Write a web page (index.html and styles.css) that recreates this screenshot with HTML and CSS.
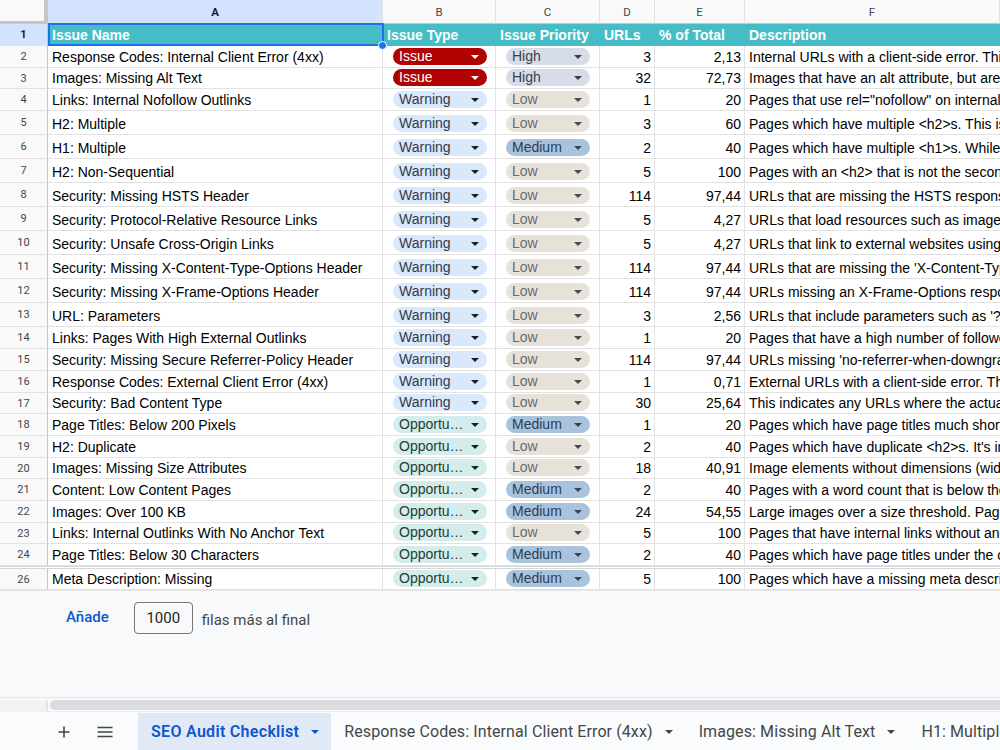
FILE: index.html
```html
<!DOCTYPE html>
<html lang="es">
<head>
<meta charset="utf-8">
<title>SEO Audit Checklist</title>
<link rel="stylesheet" href="styles.css">
</head>
<body>
<div class="app">
  <div class="sheet">
    <div class="row colhead">
      <div class="corner"></div>
      <div class="ch sel">A</div>
      <div class="ch">B</div>
      <div class="ch">C</div>
      <div class="ch">D</div>
      <div class="ch">E</div>
      <div class="ch">F</div>
    </div>

    <div class="row hdr h22">
      <div class="rh sel">1</div>
      <div class="c a1">Issue Name<span class="handle"></span></div>
      <div class="c">Issue Type</div>
      <div class="c">Issue Priority</div>
      <div class="c">URLs</div>
      <div class="c">% of Total</div>
      <div class="c">Description</div>
    </div>

    <div class="row h22">
      <div class="rh">2</div>
      <div class="c">Response Codes: Internal Client Error (4xx)</div>
      <div class="c cc"><span class="chip t issue"><span class="ct">Issue</span><i class="dd"></i></span></div>
      <div class="c cc"><span class="chip p high"><span class="ct">High</span><i class="dd"></i></span></div>
      <div class="c n">3</div>
      <div class="c n">2,13</div>
      <div class="c">Internal URLs with a client-side error. This indicates a problem occurred with the URL request.</div>
    </div>

    <div class="row h21">
      <div class="rh">3</div>
      <div class="c">Images: Missing Alt Text</div>
      <div class="c cc"><span class="chip t issue"><span class="ct">Issue</span><i class="dd"></i></span></div>
      <div class="c cc"><span class="chip p high"><span class="ct">High</span><i class="dd"></i></span></div>
      <div class="c n">32</div>
      <div class="c n">72,73</div>
      <div class="c">Images that have an alt attribute, but are missing alt text.</div>
    </div>

    <div class="row h22">
      <div class="rh">4</div>
      <div class="c">Links: Internal Nofollow Outlinks</div>
      <div class="c cc"><span class="chip t warn"><span class="ct">Warning</span><i class="dd"></i></span></div>
      <div class="c cc"><span class="chip p low"><span class="ct">Low</span><i class="dd"></i></span></div>
      <div class="c n">1</div>
      <div class="c n">20</div>
      <div class="c">Pages that use rel="nofollow" on internal outlinks.</div>
    </div>

    <div class="row h24">
      <div class="rh">5</div>
      <div class="c">H2: Multiple</div>
      <div class="c cc"><span class="chip t warn"><span class="ct">Warning</span><i class="dd"></i></span></div>
      <div class="c cc"><span class="chip p low"><span class="ct">Low</span><i class="dd"></i></span></div>
      <div class="c n">3</div>
      <div class="c n">60</div>
      <div class="c">Pages which have multiple &lt;h2&gt;s. This is not an issue.</div>
    </div>

    <div class="row h24">
      <div class="rh">6</div>
      <div class="c">H1: Multiple</div>
      <div class="c cc"><span class="chip t warn"><span class="ct">Warning</span><i class="dd"></i></span></div>
      <div class="c cc"><span class="chip p med"><span class="ct">Medium</span><i class="dd"></i></span></div>
      <div class="c n">2</div>
      <div class="c n">40</div>
      <div class="c">Pages which have multiple &lt;h1&gt;s. While this is not strictly an issue.</div>
    </div>

    <div class="row h24">
      <div class="rh">7</div>
      <div class="c">H2: Non-Sequential</div>
      <div class="c cc"><span class="chip t warn"><span class="ct">Warning</span><i class="dd"></i></span></div>
      <div class="c cc"><span class="chip p low"><span class="ct">Low</span><i class="dd"></i></span></div>
      <div class="c n">5</div>
      <div class="c n">100</div>
      <div class="c">Pages with an &lt;h2&gt; that is not the second heading level.</div>
    </div>

    <div class="row h24">
      <div class="rh">8</div>
      <div class="c">Security: Missing HSTS Header</div>
      <div class="c cc"><span class="chip t warn"><span class="ct">Warning</span><i class="dd"></i></span></div>
      <div class="c cc"><span class="chip p low"><span class="ct">Low</span><i class="dd"></i></span></div>
      <div class="c n">114</div>
      <div class="c n">97,44</div>
      <div class="c">URLs that are missing the HSTS response header.</div>
    </div>

    <div class="row h24">
      <div class="rh">9</div>
      <div class="c">Security: Protocol-Relative Resource Links</div>
      <div class="c cc"><span class="chip t warn"><span class="ct">Warning</span><i class="dd"></i></span></div>
      <div class="c cc"><span class="chip p low"><span class="ct">Low</span><i class="dd"></i></span></div>
      <div class="c n">5</div>
      <div class="c n">4,27</div>
      <div class="c">URLs that load resources such as images, JavaScript and CSS.</div>
    </div>

    <div class="row h24">
      <div class="rh">10</div>
      <div class="c">Security: Unsafe Cross-Origin Links</div>
      <div class="c cc"><span class="chip t warn"><span class="ct">Warning</span><i class="dd"></i></span></div>
      <div class="c cc"><span class="chip p low"><span class="ct">Low</span><i class="dd"></i></span></div>
      <div class="c n">5</div>
      <div class="c n">4,27</div>
      <div class="c">URLs that link to external websites using target="_blank".</div>
    </div>

    <div class="row h24">
      <div class="rh">11</div>
      <div class="c">Security: Missing X-Content-Type-Options Header</div>
      <div class="c cc"><span class="chip t warn"><span class="ct">Warning</span><i class="dd"></i></span></div>
      <div class="c cc"><span class="chip p low"><span class="ct">Low</span><i class="dd"></i></span></div>
      <div class="c n">114</div>
      <div class="c n">97,44</div>
      <div class="c">URLs that are missing the 'X-Content-Type-Options' response header.</div>
    </div>

    <div class="row h24">
      <div class="rh">12</div>
      <div class="c">Security: Missing X-Frame-Options Header</div>
      <div class="c cc"><span class="chip t warn"><span class="ct">Warning</span><i class="dd"></i></span></div>
      <div class="c cc"><span class="chip p low"><span class="ct">Low</span><i class="dd"></i></span></div>
      <div class="c n">114</div>
      <div class="c n">97,44</div>
      <div class="c">URLs missing an X-Frame-Options response header.</div>
    </div>

    <div class="row h24">
      <div class="rh">13</div>
      <div class="c">URL: Parameters</div>
      <div class="c cc"><span class="chip t warn"><span class="ct">Warning</span><i class="dd"></i></span></div>
      <div class="c cc"><span class="chip p low"><span class="ct">Low</span><i class="dd"></i></span></div>
      <div class="c n">3</div>
      <div class="c n">2,56</div>
      <div class="c">URLs that include parameters such as '?' or '&amp;'.</div>
    </div>

    <div class="row h22">
      <div class="rh">14</div>
      <div class="c">Links: Pages With High External Outlinks</div>
      <div class="c cc"><span class="chip t warn"><span class="ct">Warning</span><i class="dd"></i></span></div>
      <div class="c cc"><span class="chip p low"><span class="ct">Low</span><i class="dd"></i></span></div>
      <div class="c n">1</div>
      <div class="c n">20</div>
      <div class="c">Pages that have a high number of followed external outlinks.</div>
    </div>

    <div class="row h22">
      <div class="rh">15</div>
      <div class="c">Security: Missing Secure Referrer-Policy Header</div>
      <div class="c cc"><span class="chip t warn"><span class="ct">Warning</span><i class="dd"></i></span></div>
      <div class="c cc"><span class="chip p low"><span class="ct">Low</span><i class="dd"></i></span></div>
      <div class="c n">114</div>
      <div class="c n">97,44</div>
      <div class="c">URLs missing 'no-referrer-when-downgrade' or similar policy.</div>
    </div>

    <div class="row h22">
      <div class="rh">16</div>
      <div class="c">Response Codes: External Client Error (4xx)</div>
      <div class="c cc"><span class="chip t warn"><span class="ct">Warning</span><i class="dd"></i></span></div>
      <div class="c cc"><span class="chip p low"><span class="ct">Low</span><i class="dd"></i></span></div>
      <div class="c n">1</div>
      <div class="c n">0,71</div>
      <div class="c">External URLs with a client-side error. This indicates a problem.</div>
    </div>

    <div class="row h21">
      <div class="rh">17</div>
      <div class="c">Security: Bad Content Type</div>
      <div class="c cc"><span class="chip t warn"><span class="ct">Warning</span><i class="dd"></i></span></div>
      <div class="c cc"><span class="chip p low"><span class="ct">Low</span><i class="dd"></i></span></div>
      <div class="c n">30</div>
      <div class="c n">25,64</div>
      <div class="c">This indicates any URLs where the actual content type does not match.</div>
    </div>

    <div class="row h22">
      <div class="rh">18</div>
      <div class="c">Page Titles: Below 200 Pixels</div>
      <div class="c cc"><span class="chip t opp"><span class="ct">Opportunity</span><i class="dd"></i></span></div>
      <div class="c cc"><span class="chip p med"><span class="ct">Medium</span><i class="dd"></i></span></div>
      <div class="c n">1</div>
      <div class="c n">20</div>
      <div class="c">Pages which have page titles much shorter than the limit.</div>
    </div>

    <div class="row h22">
      <div class="rh">19</div>
      <div class="c">H2: Duplicate</div>
      <div class="c cc"><span class="chip t opp"><span class="ct">Opportunity</span><i class="dd"></i></span></div>
      <div class="c cc"><span class="chip p low"><span class="ct">Low</span><i class="dd"></i></span></div>
      <div class="c n">2</div>
      <div class="c n">40</div>
      <div class="c">Pages which have duplicate &lt;h2&gt;s. It's important to have distinct headings.</div>
    </div>

    <div class="row h21">
      <div class="rh">20</div>
      <div class="c">Images: Missing Size Attributes</div>
      <div class="c cc"><span class="chip t opp"><span class="ct">Opportunity</span><i class="dd"></i></span></div>
      <div class="c cc"><span class="chip p low"><span class="ct">Low</span><i class="dd"></i></span></div>
      <div class="c n">18</div>
      <div class="c n">40,91</div>
      <div class="c">Image elements without dimensions (width and height size attributes).</div>
    </div>

    <div class="row h22">
      <div class="rh">21</div>
      <div class="c">Content: Low Content Pages</div>
      <div class="c cc"><span class="chip t opp"><span class="ct">Opportunity</span><i class="dd"></i></span></div>
      <div class="c cc"><span class="chip p med"><span class="ct">Medium</span><i class="dd"></i></span></div>
      <div class="c n">2</div>
      <div class="c n">40</div>
      <div class="c">Pages with a word count that is below the default 200 words.</div>
    </div>

    <div class="row h22">
      <div class="rh">22</div>
      <div class="c">Images: Over 100 KB</div>
      <div class="c cc"><span class="chip t opp"><span class="ct">Opportunity</span><i class="dd"></i></span></div>
      <div class="c cc"><span class="chip p med"><span class="ct">Medium</span><i class="dd"></i></span></div>
      <div class="c n">24</div>
      <div class="c n">54,55</div>
      <div class="c">Large images over a size threshold. Page speed is important.</div>
    </div>

    <div class="row h21">
      <div class="rh">23</div>
      <div class="c">Links: Internal Outlinks With No Anchor Text</div>
      <div class="c cc"><span class="chip t opp"><span class="ct">Opportunity</span><i class="dd"></i></span></div>
      <div class="c cc"><span class="chip p low"><span class="ct">Low</span><i class="dd"></i></span></div>
      <div class="c n">5</div>
      <div class="c n">100</div>
      <div class="c">Pages that have internal links without anchor text.</div>
    </div>

    <div class="row h22">
      <div class="rh">24</div>
      <div class="c">Page Titles: Below 30 Characters</div>
      <div class="c cc"><span class="chip t opp"><span class="ct">Opportunity</span><i class="dd"></i></span></div>
      <div class="c cc"><span class="chip p med"><span class="ct">Medium</span><i class="dd"></i></span></div>
      <div class="c n">2</div>
      <div class="c n">40</div>
      <div class="c">Pages which have page titles under the configured limit.</div>
    </div>

    <div class="hidden-rows"></div>

    <div class="row h21">
      <div class="rh">26</div>
      <div class="c">Meta Description: Missing</div>
      <div class="c cc"><span class="chip t opp"><span class="ct">Opportunity</span><i class="dd"></i></span></div>
      <div class="c cc"><span class="chip p med"><span class="ct">Medium</span><i class="dd"></i></span></div>
      <div class="c n">5</div>
      <div class="c n">100</div>
      <div class="c">Pages which have a missing meta description.</div>
    </div>
  </div>

  <div class="footer">
    <span class="add-link">Añade</span>
    <span class="add-input">1000</span>
    <span class="add-text">filas más al final</span>
  </div>

  <div class="hscroll">
    <div class="hs-left"></div>
    <div class="hs-thumb"></div>
  </div>

  <div class="tabs">
    <div class="tab-btn">
      <svg width="14" height="14" viewBox="0 0 14 14"><path d="M7 1.5v11M1.5 7h11" stroke="#444746" stroke-width="1.6" fill="none"/></svg>
    </div>
    <div class="tab-btn">
      <svg width="16" height="12" viewBox="0 0 16 12"><path d="M0.5 1.5h15M0.5 6h15M0.5 10.5h15" stroke="#444746" stroke-width="1.6" fill="none"/></svg>
    </div>
    <div class="tab active"><span>SEO Audit Checklist</span><i class="tdd"></i></div>
    <div class="tab"><span>Response Codes: Internal Client Error (4xx)</span><i class="tdd"></i></div>
    <div class="tab"><span>Images: Missing Alt Text</span><i class="tdd"></i></div>
    <div class="tab"><span>H1: Multiple</span><i class="tdd"></i></div>
  </div>
</div>
</body>
</html>
```

FILE: styles.css
```css
* { box-sizing: border-box; }

html, body {
  margin: 0;
  padding: 0;
}

body {
  width: 1000px;
  height: 750px;
  overflow: hidden;
  background: #ffffff;
  font-family: "Liberation Sans", Arial, sans-serif;
  color: #000;
}

.app {
  display: flex;
  flex-direction: column;
  width: 1000px;
  height: 750px;
}

.sheet {
  flex: none;
  width: 1000px;
  overflow: hidden;
  background: #fff;
}

.row {
  display: grid;
  grid-template-columns: 48px 335px 113px 104px 55px 90px 255px;
}

.h21 { height: 21px; }
.h22 { height: 22px; }
.h24 { height: 24px; }

/* column header row */
.colhead { height: 24px; }

.corner {
  background: #f8f9fa;
  border-right: 4px solid #c4c7c5;
  border-bottom: 3px solid #c4c7c5;
}

.ch {
  display: flex;
  align-items: center;
  justify-content: center;
  background: #f9f9f9;
  border-right: 1px solid #e1e1e1;
  border-bottom: 1px solid #c4c7c5;
  font-family: Roboto, "Liberation Sans", sans-serif;
  font-size: 11.5px;
  color: #444746;
}

.ch.sel {
  background: #d3e3fd;
  color: #0b1d3a;
  font-weight: 700;
}

/* row headers */
.rh {
  display: flex;
  align-items: center;
  justify-content: center;
  background: #f9f9f9;
  border-right: 1px solid #c4c7c5;
  border-bottom: 1px solid #e1e1e1;
  font-family: Roboto, "Liberation Sans", sans-serif;
  font-size: 11px;
  color: #444746;
}

.rh.sel {
  background: #d3e3fd;
  color: #0b1d3a;
  font-weight: 700;
}

/* cells */
.c {
  display: flex;
  align-items: flex-end;
  padding: 0 3px 1px 4px;
  border-right: 1px solid #e2e2e2;
  border-bottom: 1px solid #e2e2e2;
  font-size: 14px;
  line-height: 17px;
  white-space: nowrap;
  overflow: hidden;
}

.c:last-child {
  border-right: none;
}

.c.n {
  justify-content: flex-end;
}

.c.cc {
  padding-left: 10px;
  padding-bottom: 2px;
}

/* header row */
.hdr .c {
  background: #46bdc6;
  color: #ffffff;
  font-weight: 700;
  border-right-color: #46bdc6;
  border-bottom-color: #46bdc6;
  overflow: visible;
}

.hdr .c:nth-child(3) {
  padding-left: 4px;
}

.a1 {
  position: relative;
}

.a1::after {
  content: "";
  position: absolute;
  left: 0;
  top: -1px;
  right: -2px;
  bottom: -1px;
  border: 2px solid #1a73e8;
  pointer-events: none;
}

.handle {
  position: absolute;
  right: -5px;
  bottom: -5px;
  width: 9px;
  height: 9px;
  border-radius: 50%;
  background: #1a73e8;
  border: 1px solid #ffffff;
  z-index: 3;
}

/* chips */
.chip {
  display: flex;
  align-items: center;
  justify-content: space-between;
  height: 17px;
  border-radius: 9px;
  padding: 0 8px 0 6px;
  font-size: 14px;
  line-height: 17px;
}

.chip.t { width: 94px; }
.chip.p { width: 84px; }

.ct {
  overflow: hidden;
  text-overflow: ellipsis;
  white-space: nowrap;
  max-width: 66px;
}

.dd {
  flex: none;
  width: 0;
  height: 0;
  border-left: 4px solid transparent;
  border-right: 4px solid transparent;
  border-top: 4px solid #1f1f1f;
}

.issue { background: #b10202; color: #ffffff; }
.issue .dd { border-top-color: #ffffff; }

.warn { background: #dae8fc; color: #313b4b; }
.warn .dd { border-top-color: #1f1f1f; }

.opp { background: #d4edec; color: #1e3d33; }
.opp .dd { border-top-color: #10281f; }

.high { background: #d6dde8; color: #3a404a; }
.high .dd { border-top-color: #3a3d42; }

.low { background: #e6e2d9; color: #6a6a6a; }
.low .dd { border-top-color: #4a4a4a; }

.med { background: #a9c3dd; color: #2e3e52; }
.med .dd { border-top-color: #3a4450; }

/* hidden rows marker */
.hidden-rows {
  height: 3px;
  border-top: 1px solid #d6d6d6;
  border-bottom: 1px solid #d6d6d6;
  background: #ffffff;
}

/* footer */
.footer {
  flex: 1;
  display: flex;
  align-items: flex-start;
  background: #f8f9fa;
  border-top: 1px solid #e6e6e6;
  padding: 11px 0 0 66px;
  font-family: Roboto, "Liberation Sans", sans-serif;
}

.add-link {
  color: #0b57d0;
  font-size: 15px;
  font-weight: 500;
  line-height: 31px;
  margin-right: 24px;
}

.add-input {
  width: 59px;
  height: 32px;
  border: 1px solid #747775;
  border-radius: 4px;
  display: flex;
  align-items: center;
  justify-content: center;
  font-size: 15px;
  color: #1f1f1f;
  margin-left: 1px;
  margin-right: 9px;
}

.add-text {
  font-size: 15px;
  color: #444746;
  line-height: 33px;
  padding-top: 2px;
}

/* horizontal scrollbar */
.hscroll {
  flex: none;
  height: 14px;
  display: flex;
  background: #f8f9fa;
  border-top: 1px solid #e6e6e6;
  padding: 2px 0 1px 0;
}

.hs-left {
  width: 48px;
  height: 11px;
  background: #f1f3f4;
  border-right: 2px solid #e3e3e3;
}

.hs-thumb {
  flex: 1;
  margin-left: 2px;
  height: 10px;
  background: #dadce0;
  border-radius: 5px 0 0 5px;
}

/* tabs */
.tabs {
  flex: none;
  height: 39px;
  display: flex;
  align-items: stretch;
  background: #f9fbfd;
  border-top: 1px solid #eceff1;
  padding-left: 43px;
  padding-top: 1px;
  font-family: Roboto, "Liberation Sans", sans-serif;
  font-size: 16px;
  color: #444746;
  white-space: nowrap;
  overflow: hidden;
}

.tab-btn {
  flex: none;
  width: 41px;
  display: flex;
  align-items: center;
  justify-content: center;
}

.tab-btn + .tab-btn {
  margin-right: 13px;
}

.tab {
  flex: none;
  display: flex;
  align-items: center;
  padding: 0 13px;
  gap: 12px;
  letter-spacing: 0.1px;
}

.tab.active {
  background: #e1e9f7;
  color: #0b57d0;
  font-weight: 600;
  padding: 0 12px 0 13px;
  letter-spacing: 0.3px;
}

.tdd {
  flex: none;
  width: 0;
  height: 0;
  border-left: 4px solid transparent;
  border-right: 4px solid transparent;
  border-top: 4px solid #444746;
}

.tab.active .tdd {
  border-top-color: #0b57d0;
}
```
